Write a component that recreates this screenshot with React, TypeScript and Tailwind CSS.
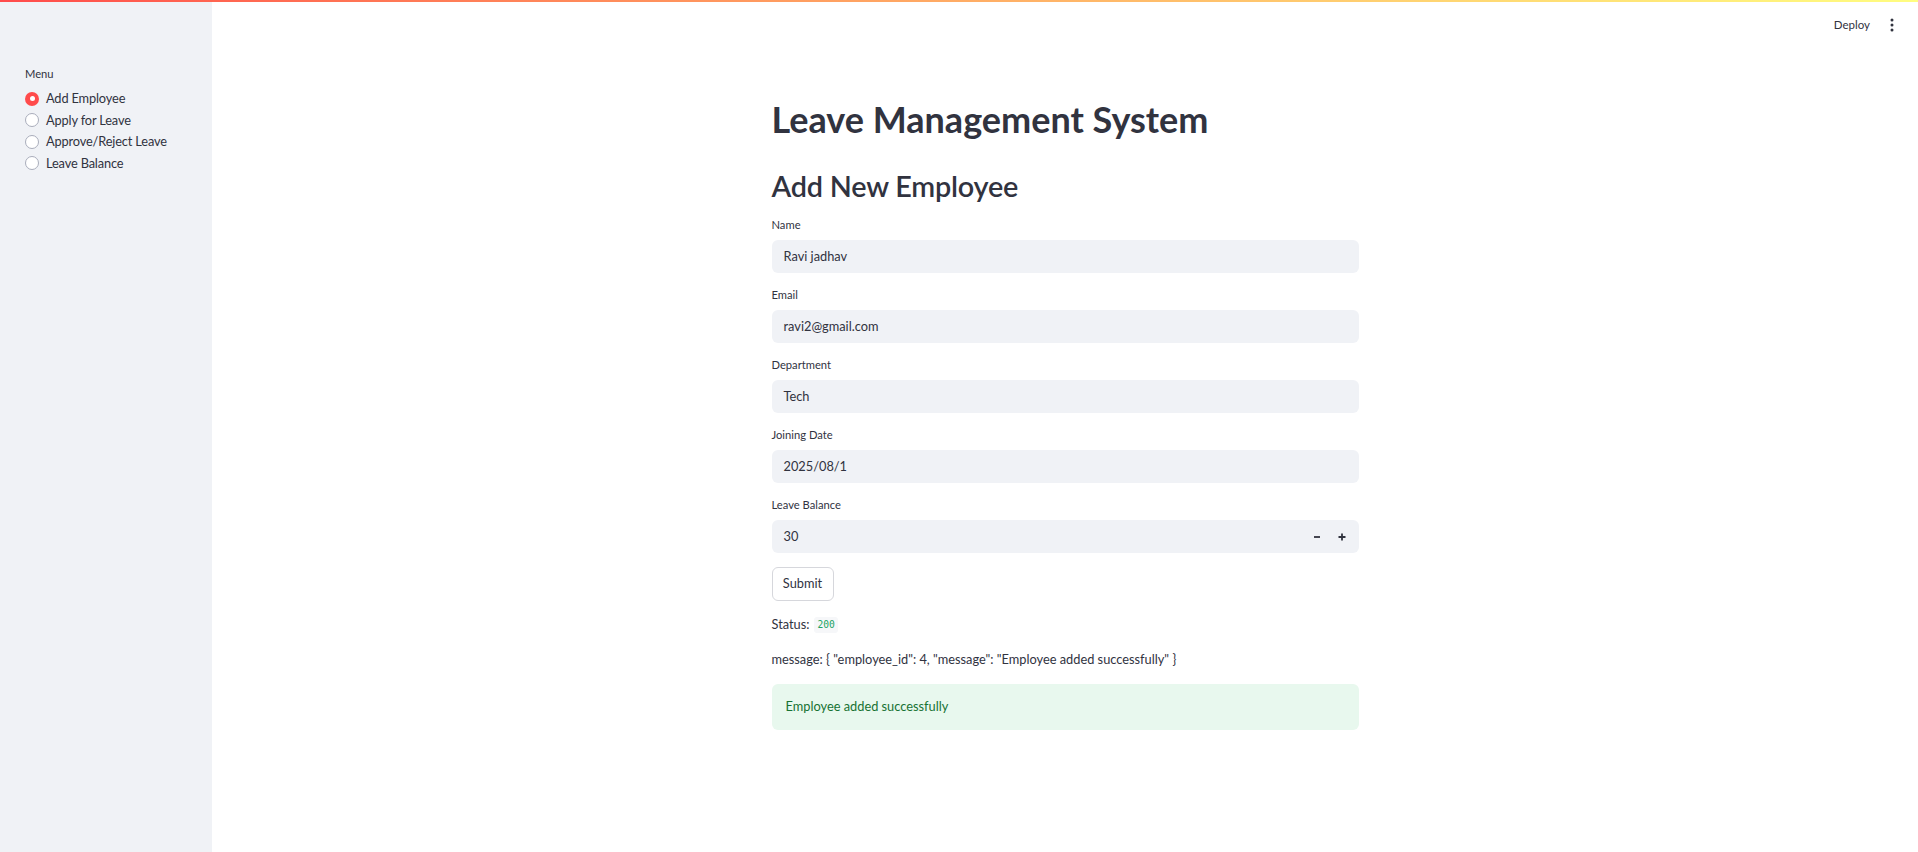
import React from "react";

const font = { fontFamily: "Lato, 'Noto Sans', sans-serif" };

const menuItems = ["Add Employee", "Apply for Leave", "Approve/Reject Leave", "Leave Balance"];

const fields = [
  { label: "Name", value: "Ravi jadhav" },
  { label: "Email", value: "ravi2@gmail.com" },
  { label: "Department", value: "Tech" },
  { label: "Joining Date", value: "2025/08/1" },
];

/**
 * Sidebar radio menu.
 */
const Sidebar = (): React.JSX.Element => {
  return (
    <aside className="w-[212px] shrink-0 bg-[#f0f2f6] pt-[64px] pl-[25px]">
      <div className="text-[11.2px] leading-[16px] text-[#31333f]">Menu</div>
      <ul className="mt-[6px] flex flex-col">
        {menuItems.map((item: string, index: number) => {
          const selected = index === 0;
          return (
            <li key={item} className="flex h-[21.5px] items-center gap-[7px]">
              {selected ? (
                <span className="flex h-[14px] w-[14px] items-center justify-center rounded-full bg-[#ff4b4b]">
                  <span className="h-[5px] w-[5px] rounded-full bg-white" />
                </span>
              ) : (
                <span className="h-[14px] w-[14px] rounded-full border border-[#a9adbb] bg-white" />
              )}
              <span className="text-[12.8px] tracking-[-0.15px] text-[#31333f]">{item}</span>
            </li>
          );
        })}
      </ul>
    </aside>
  );
};

const TextField = ({ label, value }: { label: string; value: string }): React.JSX.Element => {
  return (
    <div className="mt-[14px] flex flex-col">
      <label className="h-[16px] text-[11.2px] leading-[16px] text-[#31333f]">{label}</label>
      <div className="mt-[7px] flex h-[33px] items-center rounded-[6px] bg-[#f0f2f6] px-[12px] text-[12.8px] text-[#31333f]">
        {value}
      </div>
    </div>
  );
};

export default function App(): React.JSX.Element {
  return (
    <div className="flex h-screen flex-col overflow-hidden bg-white" style={font}>
      {/* Top decoration bar */}
      <div className="h-[2px] w-full shrink-0 bg-gradient-to-r from-[#ff4b4b] to-[#fffd80]" />
      <div className="flex flex-1">
        <Sidebar />
        <main className="flex flex-1 flex-col">
          {/* Header with deploy button */}
          <header className="flex h-[46px] items-center justify-end gap-[20px] pr-[24px]">
            <span className="text-[11.5px] text-[#31333f]">Deploy</span>
            <svg width="4" height="14" viewBox="0 0 4 14" className="mt-[-1px]">
              <circle cx="2" cy="2" r="1.5" fill="#31333f" />
              <circle cx="2" cy="7" r="1.5" fill="#31333f" />
              <circle cx="2" cy="12" r="1.5" fill="#31333f" />
            </svg>
          </header>

          <div className="mx-auto w-[587px] pt-[50px] text-[#31333f]">
            <h1 className="text-[36px] font-bold leading-[42px]">Leave Management System</h1>
            <h2 className="mt-[29px] text-[28.8px] font-semibold leading-[34px] tracking-[-0.2px]">Add New Employee</h2>

            {fields.map((field) => (
              <TextField key={field.label} label={field.label} value={field.value} />
            ))}

            {/* Number input */}
            <div className="mt-[14px] flex flex-col">
              <label className="h-[16px] text-[11.2px] leading-[16px]">Leave Balance</label>
              <div className="mt-[7px] flex h-[33px] items-center rounded-[6px] bg-[#f0f2f6] pl-[12px] pr-[4px] text-[12.8px]">
                <span className="flex-1">30</span>
                <span className="flex h-[33px] w-[25px] items-center justify-center">
                  <svg width="8" height="8" viewBox="0 0 8 8">
                    <path d="M1 4h6" stroke="#31333f" strokeWidth="1.8" />
                  </svg>
                </span>
                <span className="flex h-[33px] w-[25px] items-center justify-center">
                  <svg width="8" height="8" viewBox="0 0 8 8">
                    <path d="M0.5 4h7M4 0.5v7" stroke="#31333f" strokeWidth="1.8" />
                  </svg>
                </span>
              </div>
            </div>

            <button className="mt-[14px] flex h-[34px] w-[62px] items-center justify-center rounded-[6px] border border-[#d6d7dc] bg-white text-[12.8px] text-[#31333f]">
              Submit
            </button>

            <div className="mt-[14px] flex h-[20px] items-center text-[12.8px]">
              Status:
              <code
                className="ml-[5px] rounded-[3px] bg-[#f6f7f9] px-[3px] py-[1px] text-[9.6px] text-[#21a464]"
                style={{ fontFamily: "'DejaVu Sans Mono', 'Liberation Mono', monospace" }}
              >
                200
              </code>
            </div>

            <div className="mt-[14px] flex h-[21px] items-center text-[12.8px]">
              message: {'{ "employee_id": 4, "message": "Employee added successfully" }'}
            </div>

            <div className="mt-[14px] flex h-[46px] items-center rounded-[6px] bg-[#e8f8ee] px-[14px] text-[12.8px] text-[#177233]">
              Employee added successfully
            </div>
          </div>
        </main>
      </div>
    </div>
  );
}
